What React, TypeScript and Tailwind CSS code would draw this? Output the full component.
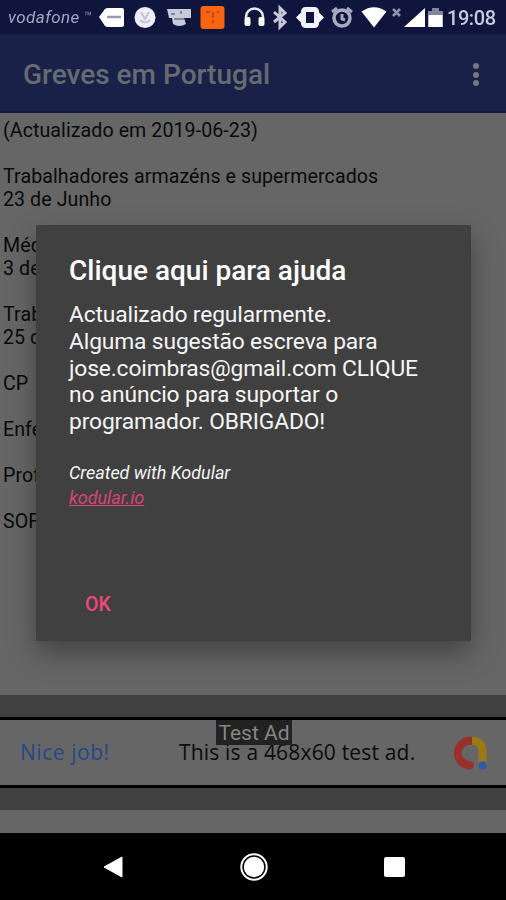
import React from 'react';

type Strike = { title: string; date?: string };

const strikes: Strike[] = [
  { title: '(Actualizado em 2019-06-23)' },
  { title: 'Trabalhadores armazéns e supermercados', date: '23 de Junho' },
  { title: 'Méd', date: '3 de' },
  { title: 'Trab', date: '25 d' },
  { title: 'CP' },
  { title: 'Enfe' },
  { title: 'Prof' },
  { title: 'SOF' },
];

const StatusBar: React.FC = () => (
  <div className="flex h-[34px] shrink-0 items-center bg-[#10153d] pl-2 text-white">
    <div className="flex items-center blur-[0.7px]">
      <span className="w-[76px] text-[17px] leading-none tracking-[0.4px] text-[#a4a6c0] italic blur-[0.6px]">vodafone</span>
      <span className="w-[14px] -translate-y-[1px] text-[13px] leading-none text-[#9395b0]">™</span>
      <svg width="400" height="34" viewBox="98 0 400 34" fill="none">
        {/* notifications */}
        <path d="M99 17l6-8q1-1 3-1h14q2 0 2 2v15q0 2-2 2h-14q-2 0-3-1z" fill="#fff" />
        <path d="M107 17h14" stroke="#9a9cb2" strokeWidth="2.500" />
        <circle cx="145" cy="17.500" r="10.500" fill="#eeeef4" />
        <path d="M141 12l4 7 4-7M140 20q5 5 10 0" stroke="#c4c6d4" strokeWidth="2" />
        <path d="M167 9h24v9h-7l2 6q-7 4-13 0l-1-6h-3z" fill="#c9cad9" />
        <path d="M171 14h4M181 11v3M174 19h10" stroke="#6d7090" strokeWidth="1.500" />
        <rect x="200.500" y="6" width="24" height="23" rx="3" fill="#fa6411" />
        <path d="M206 12h4M213 12v6M213 20v3M218 11v2" stroke="#b84d1c" strokeWidth="2" />
        {/* system icons */}
        <path d="M246 18v-1a8.500 8.500 0 0 1 17 0v1" stroke="#e8e8f0" strokeWidth="2.500" />
        <rect x="244.500" y="17" width="6" height="9" rx="2" fill="#fff" />
        <rect x="258.500" y="17" width="6" height="9" rx="2" fill="#fff" />
        <path d="M274 12l11 10-5 5V8l5 5-11 9" stroke="#c5c6d6" strokeWidth="3" />
        <path d="M296 17.500l6-6v12zM324 17.500l-6-6v12z" fill="#fff" />
        <rect x="303.500" y="9.500" width="13" height="16" rx="2" stroke="#f1f1f6" strokeWidth="5" />
        <circle cx="342" cy="18" r="8" stroke="#a9abc1" strokeWidth="3.500" />
        <path d="M332 12l5-4M352 12l-5-4M342 14v5l3 1" stroke="#a4a6bd" strokeWidth="3" />
        <path d="M361.500 11.500q12.500-8.500 25 0L374 27.500z" fill="#fff" />
        <path d="M393 9l7 7M400 9l-7 7" stroke="#9092ac" strokeWidth="2.500" />
        <path d="M404 27L425 8v19z" fill="#fff" />
        <path d="M432 8h7v3h4v16h-15V11h4z" fill="#8184a0" />
        <path d="M428.500 15h14v12h-14z" fill="#fff" />
        <text x="447" y="24.500" textLength="49" fill="#c8c9da" fontSize="20" fontFamily="Roboto, sans-serif" fontWeight="500" className="blur-[0.5px]">19:08</text>
      </svg>
    </div>
  </div>
);

const Toolbar: React.FC = () => (
  <header className="flex h-[79px] shrink-0 items-center justify-between border-b-2 border-[#151942] bg-[#1a2148] pt-[4px] pr-[27px] pl-[23px]">
    <h1 className="pt-px text-[28px] leading-8 font-medium text-[#666b72]">Greves em Portugal</h1>
    <div className="flex flex-col gap-[2.5px]">
      <i className="size-1.5 rounded-full bg-[#737880]" />
      <i className="size-1.5 rounded-full bg-[#737880]" />
      <i className="size-1.5 rounded-full bg-[#737880]" />
    </div>
  </header>
);

const AdBanner: React.FC = () => (
  <div className="h-[115px] shrink-0 bg-[#404040] py-[22px]">
    <div className="relative flex h-[71px] items-center border-y-3 border-black bg-[#666] pr-[18px] pl-5 font-['Open_Sans',sans-serif] text-[21px]">
      <span className="w-[159px] pt-px font-medium tracking-[0.55px] text-[#24488a]">Nice job!</span>
      <span className="grow pt-px tracking-[0.18px] whitespace-nowrap text-[#0c0c0c]">This is a 468x60 test ad.</span>
      <svg width="34" height="34" viewBox="0 0 34 34" fill="none">
        <path d="M17.500 4.700Q28.500 5 28.500 16V29" stroke="#9c7914" strokeWidth="8" />
        <path d="M18 4.700H16A12.300 12.300 0 0 0 16 29.300" stroke="#98302b" strokeWidth="8" />
        <circle cx="16" cy="29.300" r="4" fill="#98302b" />
        <circle cx="28.500" cy="29.300" r="4" fill="#2a59ad" />
      </svg>
      <span className="absolute top-0 left-[216px] h-[25px] w-[76px] bg-[#222] text-center font-[Roboto,sans-serif] text-[21px] leading-[26px] whitespace-nowrap text-[#858585]">
        Test Ad
      </span>
    </div>
  </div>
);

const NavBar: React.FC = () => (
  <nav className="flex h-[67px] shrink-0 items-center justify-between bg-black pr-[101px] pl-[103px]">
    <svg width="20" height="22" viewBox="0 0 20 22">
      <path d="M1 11L19 1v20z" fill="#fff" stroke="#fff" strokeLinejoin="round" />
    </svg>
    <svg width="28" height="28" viewBox="0 0 28 28">
      <circle cx="14" cy="14" r="12.700" fill="none" stroke="#fff" strokeWidth="2" />
      <circle cx="14" cy="14" r="10.200" fill="#fff" />
    </svg>
    <div className="h-5 w-[21px] rounded-[2px] bg-white" />
  </nav>
);

const HelpDialog: React.FC = () => (
  <div
    role="dialog"
    className="absolute top-[225px] left-9 flex h-[416px] w-[435px] flex-col bg-[#404040] pt-[29px] pl-[33px] text-white shadow-[0_12px_26px_0_rgba(0,0,0,0.35)]"
  >
    <h2 className="text-[28px] leading-[34px] font-medium">Clique aqui para ajuda</h2>
    <p className="mt-[14px] text-[22.8px] leading-[26.8px] tracking-[-0.14px] whitespace-nowrap text-[#f5f5f5]">
      Actualizado regularmente.
      <br />
      Alguma sugestão escreva para
      <br />
      jose.coimbras@gmail.com CLIQUE
      <br />
      no anúncio para suportar o
      <br />
      programador. OBRIGADO!
    </p>
    <p className="mt-6 text-[18px] leading-[25px] tracking-[-0.04px] text-[#f5f5f5] italic">
      Created with Kodular
      <br />
      <a className="text-[#d84473] underline">kodular.io</a>
    </p>
    <button className="mt-[83px] ml-4 self-start text-[19.5px] leading-6 font-medium text-[#f0477f]">OK</button>
  </div>
);

const App: React.FC = () => {
  return (
    <div className="relative flex h-[900px] w-[506px] flex-col overflow-hidden bg-[#666] font-[Roboto,sans-serif]">
      <StatusBar />
      <Toolbar />
      <main className="flex grow flex-col gap-[23px] pt-[6px] pl-[3px] text-[19.6px] leading-[23px] tracking-[0.08px] text-[#0a0a0a]">
        {strikes.map(s => (
          <div key={s.title}>
            <p>{s.title}</p>
            {s.date && <p>{s.date}</p>}
          </div>
        ))}
      </main>
      <AdBanner />
      <div className="h-[23px] shrink-0 bg-[#666]" />
      <NavBar />
      <HelpDialog />
    </div>
  );
};

export default App;
